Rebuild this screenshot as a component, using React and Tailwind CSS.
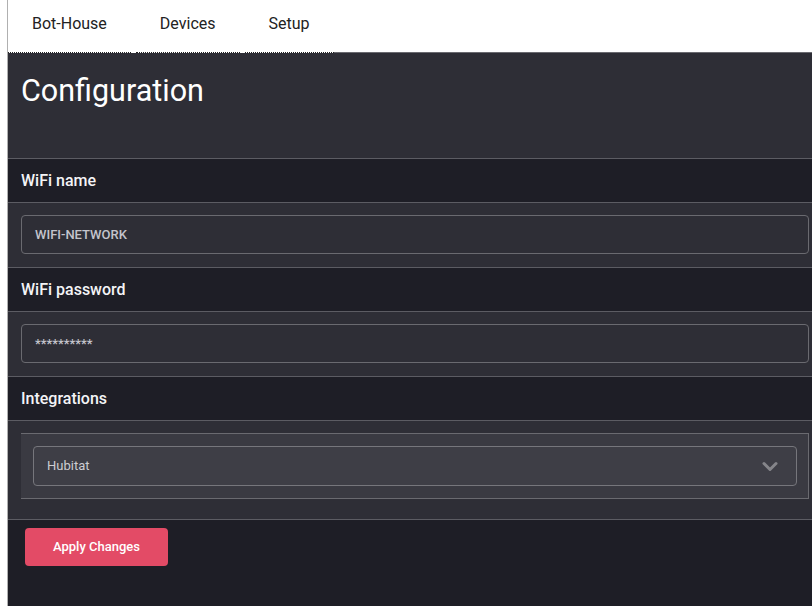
const TABS = ['Bot-House', 'Devices', 'Setup']

function SectionLabel({ children }) {
  return (
    <div className="h-[44px] flex items-center px-[13px] bg-[#1e1e26] border-b border-[#5c5c63] text-[16px] font-medium text-[#f4f4f6]">
      {children}
    </div>
  )
}

function TextField({ value }) {
  return (
    <div className="h-[65px] pt-[12px] pl-[13px] pr-[3px] bg-[#2e2e36] border-b border-[#5c5c63]">
      <div className="h-[39px] flex items-center px-[13px] rounded-[4px] border border-[#6a6a70] text-[13px] font-medium text-[#c4c4cc]">
        {value}
      </div>
    </div>
  )
}

export default function App() {
  return (
    <div className="flex w-[812px] h-[606px] overflow-hidden bg-white" style={{ fontFamily: 'Roboto, "Liberation Sans", sans-serif' }}>
      <div className="w-[8px] shrink-0 bg-white border-r border-[#b0b0b0]" />
      <div className="flex-1 flex flex-col min-w-0">
        <nav className="h-[53px] flex bg-white">
          {TABS.map((t, i) => (
            <div
              key={t}
              className={`h-full flex items-center pb-[5px] px-6 border-b border-dotted border-[#222] text-[16px] text-[#222] ${i > 0 ? 'ml-[5px]' : ''}`}
            >
              {t}
            </div>
          ))}
          <div className="flex-1 border-b border-[#6a6a70]" />
        </nav>

        <div className="h-[106px] pt-[20px] px-[13px] bg-[#2e2e36] border-b border-[#5c5c63]">
          <h1 className="text-[30.5px] leading-[36px] text-white">Configuration</h1>
        </div>

        <SectionLabel>WiFi name</SectionLabel>
        <TextField value="WIFI-NETWORK" />

        <SectionLabel>WiFi password</SectionLabel>
        <TextField value="**********" />

        <SectionLabel>Integrations</SectionLabel>
        <div className="h-[99px] pt-[12px] pl-[13px] pr-[3px] bg-[#2e2e36] border-b border-[#5c5c63]">
          <div className="h-[66px] pt-[12px] pl-[12px] pr-[11px] bg-[#3a3a42] border-t border-b border-r border-[#6a6a70]">
            <div className="h-[40px] flex items-center justify-between pl-[13px] pr-[18px] rounded-[4px] bg-[#3e3e46] border border-[#76767c] text-[13px] text-[#cdcdd2]">
              <span>Hubitat</span>
              <svg width="16" height="11" viewBox="0 0 16 11" fill="none">
                <path d="M2 2.5l6 6 6-6" stroke="#85858a" strokeWidth="3" strokeLinecap="round" strokeLinejoin="round" />
              </svg>
            </div>
          </div>
        </div>

        <div className="flex-1 bg-[#1e1e26] pt-[8px] pl-[17px]">
          <button className="w-[143px] h-[38px] rounded-[4px] bg-[#e34b66] text-[13px] font-medium text-white">
            Apply Changes
          </button>
        </div>
      </div>
    </div>
  )
}
